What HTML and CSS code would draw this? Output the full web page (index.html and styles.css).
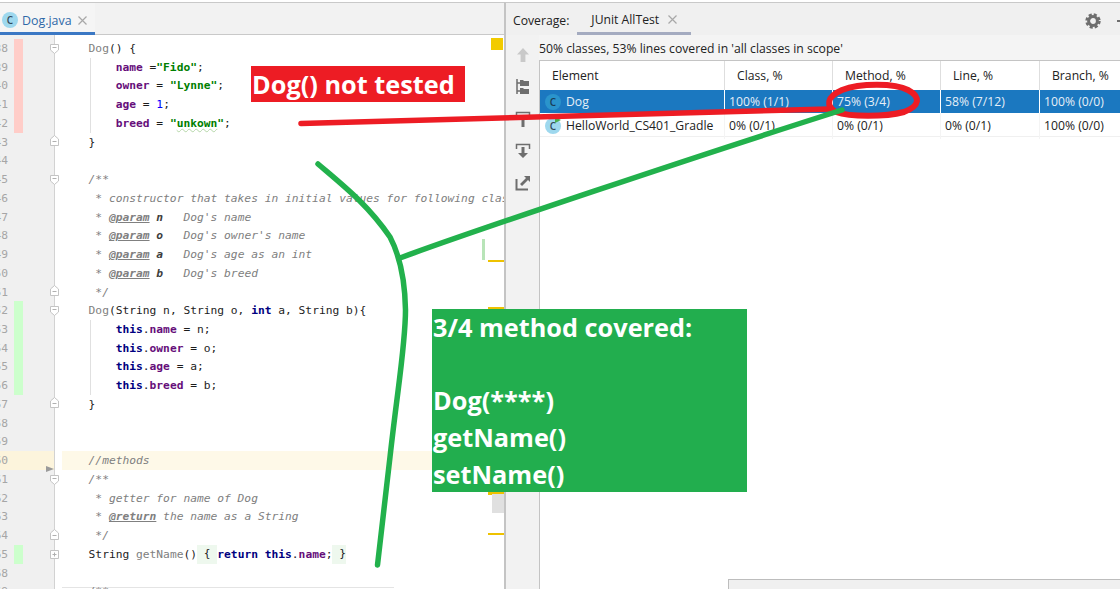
FILE: index.html
```html
<!DOCTYPE html>
<html lang="en">
<head>
<meta charset="utf-8">
<title>Dog.java coverage</title>
<link rel="stylesheet" href="styles.css">
</head>
<body>
<svg class="defs" width="0" height="0" aria-hidden="true">
  <symbol id="fold-open" viewBox="0 0 9 10"><path d="M.5.5h8v5.5l-4 3.5-4-3.5z" fill="#fff" stroke="#c4c4c4"/><path d="M2.5 3.5h4" stroke="#b0b0b0"/></symbol>
  <symbol id="fold-end" viewBox="0 0 9 11"><path d="M.5 10.5h8v-6.5l-4-3.5-4 3.5z" fill="#fff" stroke="#c4c4c4"/><path d="M2.5 6.5h4" stroke="#b0b0b0"/></symbol>
  <symbol id="fold-plus" viewBox="0 0 9 9"><path d="M.5.5h8v8h-8z" fill="#fff" stroke="#c4c4c4"/><path d="M2.5 4.5h4M4.5 2.5v4" stroke="#b0b0b0"/></symbol>
  <symbol id="close" viewBox="0 0 9 9"><path d="M.5.5l8 8M8.5.5l-8 8" fill="none" stroke="#a8a8a8" stroke-width="1.2"/></symbol>
</svg>
<div class="app">
  <section class="left">
    <div class="tabs">
      <div class="tab">
        <span class="cicon">C</span>
        <span class="tab-name">Dog.java</span>
        <svg class="x"><use href="#close"/></svg>
      </div>
    </div>
    <div class="editor">
      <div class="row"><div class="gut"><span class="num"><b>38</b></span><i class="cov red"></i><svg class="fold"><use href="#fold-open"/></svg></div><div class="code">    <span class="un">Dog</span>() {</div></div>
      <div class="row guide"><div class="gut"><span class="num"><b>39</b></span><i class="cov red"></i></div><div class="code">        <span class="f">name</span> =<span class="s">"Fido"</span>;</div></div>
      <div class="row guide"><div class="gut"><span class="num"><b>40</b></span><i class="cov red"></i></div><div class="code">        <span class="f">owner</span> = <span class="s">"Lynne"</span>;</div></div>
      <div class="row guide"><div class="gut"><span class="num"><b>41</b></span><i class="cov red"></i></div><div class="code">        <span class="f">age</span> = <span class="n">1</span>;</div></div>
      <div class="row guide"><div class="gut"><span class="num"><b>42</b></span><i class="cov red"></i></div><div class="code">        <span class="f">breed</span> = <span class="s">"<span class="typo">unkown</span>"</span>;</div></div>
      <div class="row"><div class="gut"><span class="num"><b>43</b></span><i class="cov"></i><svg class="fold end"><use href="#fold-end"/></svg></div><div class="code">    }</div></div>
      <div class="row"><div class="gut"><span class="num"><b>44</b></span><i class="cov"></i></div><div class="code"></div></div>
      <div class="row"><div class="gut"><span class="num"><b>45</b></span><i class="cov"></i><svg class="fold"><use href="#fold-open"/></svg></div><div class="code c">    /**</div></div>
      <div class="row"><div class="gut"><span class="num"><b>46</b></span><i class="cov"></i></div><div class="code c">     * constructor that takes in initial values for following class variables</div></div>
      <div class="row"><div class="gut"><span class="num"><b>47</b></span><i class="cov"></i></div><div class="code c">     * <span class="tag">@param</span> <span class="p">n</span>   Dog's name</div></div>
      <div class="row"><div class="gut"><span class="num"><b>48</b></span><i class="cov"></i></div><div class="code c">     * <span class="tag">@param</span> <span class="p">o</span>   Dog's owner's name</div></div>
      <div class="row"><div class="gut"><span class="num"><b>49</b></span><i class="cov"></i></div><div class="code c">     * <span class="tag">@param</span> <span class="p">a</span>   Dog's age as an int</div></div>
      <div class="row"><div class="gut"><span class="num"><b>50</b></span><i class="cov"></i></div><div class="code c">     * <span class="tag">@param</span> <span class="p">b</span>   Dog's breed</div></div>
      <div class="row"><div class="gut"><span class="num"><b>51</b></span><i class="cov"></i><svg class="fold end"><use href="#fold-end"/></svg></div><div class="code c">     */</div></div>
      <div class="row"><div class="gut"><span class="num"><b>52</b></span><i class="cov green"></i><svg class="fold"><use href="#fold-open"/></svg></div><div class="code">    <span class="un">Dog</span>(String n, String o, <span class="k">int</span> a, String b){</div></div>
      <div class="row guide"><div class="gut"><span class="num"><b>53</b></span><i class="cov green"></i></div><div class="code">        <span class="k">this</span>.<span class="f">name</span> = n;</div></div>
      <div class="row guide"><div class="gut"><span class="num"><b>54</b></span><i class="cov green"></i></div><div class="code">        <span class="k">this</span>.<span class="f">owner</span> = o;</div></div>
      <div class="row guide"><div class="gut"><span class="num"><b>55</b></span><i class="cov green"></i></div><div class="code">        <span class="k">this</span>.<span class="f">age</span> = a;</div></div>
      <div class="row guide"><div class="gut"><span class="num"><b>56</b></span><i class="cov green"></i></div><div class="code">        <span class="k">this</span>.<span class="f">breed</span> = b;</div></div>
      <div class="row"><div class="gut"><span class="num"><b>57</b></span><i class="cov"></i><svg class="fold end"><use href="#fold-end"/></svg></div><div class="code">    }</div></div>
      <div class="row"><div class="gut"><span class="num"><b>58</b></span><i class="cov"></i></div><div class="code"></div></div>
      <div class="row"><div class="gut"><span class="num"><b>59</b></span><i class="cov"></i></div><div class="code"></div></div>
      <div class="row current"><div class="gut"><span class="num"><b>60</b></span><i class="cov"></i><i class="arrow"></i></div><div class="code c">    //methods</div></div>
      <div class="row"><div class="gut"><span class="num"><b>61</b></span><i class="cov"></i><svg class="fold"><use href="#fold-open"/></svg></div><div class="code c">    /**</div></div>
      <div class="row"><div class="gut"><span class="num"><b>62</b></span><i class="cov"></i></div><div class="code c">     * getter for name of Dog</div></div>
      <div class="row"><div class="gut"><span class="num"><b>63</b></span><i class="cov"></i></div><div class="code c">     * <span class="tag">@return</span> the name as a String</div></div>
      <div class="row"><div class="gut"><span class="num"><b>64</b></span><i class="cov"></i><svg class="fold end"><use href="#fold-end"/></svg></div><div class="code c">     */</div></div>
      <div class="row"><div class="gut"><span class="num"><b>65</b></span><i class="cov green"></i><svg class="fold plus"><use href="#fold-plus"/></svg></div><div class="code">    String <span class="un">getName</span>()<span class="folded"> { </span><span class="k">return this</span>.<span class="f">name</span>;<span class="folded"> }</span></div></div>
      <div class="row"><div class="gut"><span class="num"><b>68</b></span><i class="cov"></i></div><div class="code"></div></div>
      <div class="row last"><div class="gut"><span class="num"><b>69</b></span><i class="cov"></i></div><div class="code c">    /**</div></div>
      <i class="mark sq"></i>
      <i class="mark cov-bar"></i>
      <i class="mark dash d1"></i>
      <i class="mark dash d2"></i>
      <i class="mark dash d3"></i>
      <i class="mark dash d4"></i>
      <i class="mark thumb"></i>
    </div>
  </section>

  <section class="right">
    <header class="cov-head">
      <span class="cov-label">Coverage:</span>
      <div class="cov-tab"><span>JUnit AllTest</span><svg class="x"><use href="#close"/></svg></div>
      <svg class="gear" viewBox="0 0 16 16"><circle cx="8" cy="8" r="4.4" fill="none" stroke="#6e6e6e" stroke-width="3"/><circle cx="8" cy="8" r="6.5" fill="none" stroke="#6e6e6e" stroke-width="2.4" stroke-dasharray="3.1 2.0"/></svg>
      <span class="dash-btn"></span>
    </header>
    <div class="cov-body">
      <nav class="tools">
        <svg class="tool" viewBox="0 0 16 16"><path d="M8 1l6 6.5h-3.6V15H5.600V7.500H2z" fill="#c9c9c9"/></svg>
        <svg class="tool" viewBox="0 0 16 16"><path d="M2 0v15M2 4h3M2 12h3" fill="none" stroke="#6e6e6e" stroke-width="1.500"/><path d="M5 1h3l1 1h5v5H5zM5 9h3l1 1h5v5H5z" fill="#6e6e6e"/></svg>
        <svg class="tool" viewBox="0 0 16 16"><path d="M1.500 6V1.500h13V6" fill="none" stroke="#6e6e6e" stroke-width="1.500"/><path d="M8 4l5 5H9.500v7h-3V9H3z" fill="#6e6e6e"/></svg>
        <svg class="tool" viewBox="0 0 16 16"><path d="M1.500 6V1.500h13V6" fill="none" stroke="#6e6e6e" stroke-width="1.500"/><path d="M8 15l5-5H9.500V4h-3v6H3z" fill="#6e6e6e"/></svg>
        <svg class="tool" viewBox="0 0 16 16"><path d="M1.500 4v10.500H13" fill="none" stroke="#6e6e6e" stroke-width="2"/><path d="M9 1h6v6l-2-2-6 6-2-2 6-6z" fill="#6e6e6e"/></svg>
      </nav>
      <div class="main">
        <p class="summary">50% classes, 53% lines covered in 'all classes in scope'</p>
        <div class="table">
          <div class="tr th">
            <div class="first">Element</div><div>Class, %</div><div>Method, %</div><div>Line, %</div><div>Branch, %</div>
          </div>
          <div class="tr sel">
            <div class="first"><span class="cicon small">C</span>Dog</div><div>100% (1/1)</div><div>75% (3/4)</div><div>58% (7/12)</div><div>100% (0/0)</div>
          </div>
          <div class="tr">
            <div class="first"><span class="cicon small run">C</span>HelloWorld_CS401_Gradle</div><div>0% (0/1)</div><div>0% (0/1)</div><div>0% (0/1)</div><div>100% (0/0)</div>
          </div>
        </div>
      </div>
    </div>
  </section>
</div>

<div class="note note-red">Dog() not tested</div>
<div class="note note-green">3/4 method covered:<br><br>Dog(****)<br>getName()<br>setName()</div>
<div class="popup"></div>

<svg class="ink" viewBox="0 0 1120 589" width="1120" height="589" aria-hidden="true">
  <path class="ink-red" d="M301 123.500C420 120 560 116 700 112.500L830 109"/>
  <path class="ink-red oval" d="M842 90C860 83 895 83 908 90C921 97 920 106 904 112C885 117 850 117 836 112C826 106 826 97 842 90Z"/>
  <path class="ink-green" d="M400 258C470 232 700 155 842 110"/>
  <path class="ink-green" d="M318 164C345 187 368 205 390 237C400 256 405 280 405.500 310C405.500 345 398 385 390 457L377.500 565"/>
</svg>
</body>
</html>
```

FILE: styles.css
```css
html, body {
  margin: 0;
  height: 589px;
  overflow: hidden;
  background: #fff;
}
body {
  position: relative;
  font-family: "Open Sans", "Noto Sans", sans-serif;
  font-size: 12.200px;
  color: #222;
}
.defs { position: absolute; }
.app {
  display: flex;
  height: 589px;
  box-sizing: border-box;
  padding-top: 2px;
}

/* left: editor */
.left {
  width: 504px;
  flex: none;
  display: flex;
  flex-direction: column;
  border-top: 1px solid #c9c9c9;
}
.tabs {
  height: 31px;
  flex: none;
  background: #f2f2f2;
  border-bottom: 1px solid #c9c9c9;
}
.tab {
  width: 95px;
  height: 32px;
  box-sizing: border-box;
  border-bottom: 3px solid #3b78c4;
  display: flex;
  align-items: center;
  padding-left: 2px;
  padding-top: 5px;
  background: #f5f5f5;
}
.tab-name {
  margin-left: 4px;
  font-size: 12.400px;
  color: #2f68a8;
}
.x { width: 9px; height: 9px; flex: none; }
.tab .x { margin-left: 6px; }
.cicon {
  width: 16px;
  height: 16px;
  flex: none;
  border-radius: 50%;
  background: #9ed8ee;
  color: #33495a;
  font-size: 10px;
  font-weight: 600;
  line-height: 16px;
  text-align: center;
}
.editor {
  position: relative;
  flex: 1;
  overflow: hidden;
  padding-top: 4px;
  font-family: "DejaVu Sans Mono", monospace;
  font-size: 11.250px;
  color: #1c1c1c;
  background: linear-gradient(to right, #f0f0f0 54px, #d2d2d2 54px, #d2d2d2 55px, #fff 55px);
}
.row {
  position: relative;
  display: flex;
  height: 18.740px;
  line-height: 18.740px;
}
.gut {
  position: relative;
  width: 55px;
  flex: none;
  display: flex;
}
.num {
  width: 8px;
  flex: none;
  display: flex;
  justify-content: flex-end;
  padding-top: 1px;
  color: #a6a6a6;
}
.num b { font-weight: 400; }
.cov { width: 9px; margin-left: 6px; flex: none; }
.cov.red { background: #ffcdc8; }
.cov.green { background: #ccffcc; }
.fold {
  position: absolute;
  left: 50px;
  top: 5px;
  width: 9px;
  height: 10px;
}
.fold.end { top: 2.500px; height: 11px; }
.fold.plus { top: 5px; height: 9px; }
.arrow {
  position: absolute;
  left: 46px;
  top: 14.500px;
  width: 0;
  height: 0;
  border-left: 8px solid #9a9a9a;
  border-top: 3.500px solid transparent;
  border-bottom: 3.500px solid transparent;
}
.code {
  flex: 1;
  min-width: 0;
  margin-left: 6.500px;
  padding-top: 1px;
  white-space: pre;
  overflow: hidden;
}
.current .gut {
  background: linear-gradient(to right, #fcf4dc 54px, #d2d2d2 54px);
}
.current .code { background: #fef9e8; }
.last .code {
  background: linear-gradient(#e4e4e4, #e4e4e4) no-repeat 0 5px / 332px 1px;
}
.guide::before {
  content: "";
  position: absolute;
  left: 90px;
  top: 0;
  bottom: 0;
  width: 1px;
  background: #e0e0e0;
}
.un { color: #808080; }
.f { color: #660e7a; font-weight: 700; }
.s { color: #008000; font-weight: 700; }
.n { color: #0000ff; }
.k { color: #000080; font-weight: 700; }
.c { color: #808080; font-style: italic; }
.tag { font-weight: 700; text-decoration: underline; }
.p { color: #3d3d3d; font-weight: 700; }
.typo { text-decoration: underline wavy #b4d6a8 1px; }
.folded {
  display: inline-block;
  height: 19.740px;
  margin-top: -1px;
  vertical-align: top;
  background: #eef8ee;
}
.mark { position: absolute; display: block; }
.sq { left: 491px; top: 3px; width: 12px; height: 12px; background: #f2cb00; }
.cov-bar { left: 482px; top: 204px; width: 3px; height: 21px; background: #b8e4b8; }
.dash { left: 488px; width: 16px; height: 2px; background: #eec200; }
.d1 { top: 225px; }
.d2 { top: 272px; height: 3px; }
.d3 { top: 457px; height: 3px; }
.d4 { top: 498px; }
.thumb { left: 492px; top: 459px; width: 12px; height: 19px; background: #e0e0e0; }

/* right: coverage */
.right {
  flex: 1;
  min-width: 0;
  display: flex;
  flex-direction: column;
  border-left: 2px solid #c4c4c4;
  border-top: 1px solid #c9c9c9;
  background: #f2f2f2;
}
.cov-head {
  height: 32px;
  flex: none;
  box-sizing: border-box;
  display: flex;
  align-items: center;
  background: #f0f0f0;
  padding-left: 7px;
  padding-top: 3px;
}
.cov-tab {
  margin-left: 8px;
  width: 114px;
  height: 29px;
  box-sizing: border-box;
  border-bottom: 3px solid #a4abc0;
  display: flex;
  align-items: center;
  padding-left: 14px;
}
.cov-tab .x { margin-left: 9px; }
.gear { width: 16px; height: 16px; margin-left: auto; margin-right: 16px; }
.dash-btn { width: 3px; height: 2px; background: #6e6e6e; flex: none; }
.cov-body { flex: 1; display: flex; min-height: 0; }
.tools {
  width: 33px;
  flex: none;
  display: flex;
  flex-direction: column;
  align-items: center;
  gap: 16px;
  padding-top: 11.500px;
}
.tool { width: 16px; height: 16px; flex: none; }
.main { flex: 1; min-width: 0; display: flex; flex-direction: column; }
.summary {
  height: 25px;
  margin: 0;
  box-sizing: border-box;
  padding-top: 5px;
  line-height: 17px;
  white-space: nowrap;
  background: #f4f4f4;
}
.table {
  flex: 1;
  background: #fff;
  border-top: 1px solid #c4c4c4;
  border-left: 1px solid #c4c4c4;
}
.tr {
  display: grid;
  grid-template-columns: 184px 108px 108px 99px 81px;
  height: 24px;
  line-height: 26px;
  border-bottom: 1px solid #f0f0f0;
  box-sizing: border-box;
}
.tr > div {
  box-sizing: border-box;
  padding-left: 4px;
  border-left: 1px solid #f4f4f4;
  white-space: nowrap;
}
.tr > .first {
  border-left: 0;
  padding-left: 5px;
  display: flex;
  align-items: center;
  gap: 5px;
}
.th {
  height: 29px;
  line-height: 30px;
  border-bottom: 0;
}
.th > div { border-left-color: #dedede; padding-left: 12px; margin-bottom: 1px; }
.th > .first { padding-left: 12px; }
.sel {
  background: #1b78c0;
  color: #e6eff7;
  border-bottom: 0;
  height: 23px;
  line-height: 24px;
}
.sel > div { border-left-color: #fff; }
.cicon.small { width: 16px; height: 16px; line-height: 16px; position: relative; }
.sel .cicon { background: #2a94cc; color: #1b3d55; }
.run::after {
  content: "";
  position: absolute;
  right: 0;
  top: -1px;
  border-left: 6px solid #4caf50;
  border-top: 3px solid transparent;
  border-bottom: 3px solid transparent;
}

/* annotations */
.note {
  position: absolute;
  font-family: "Open Sans", "Noto Sans", sans-serif;
  font-weight: 700;
  color: #fff;
}
.note-red {
  left: 251px;
  top: 66px;
  width: 214px;
  height: 36px;
  background: #ed1c24;
  padding-left: 1px;
  box-sizing: border-box;
  font-size: 25.300px;
  line-height: 37px;
}
.note-green {
  left: 432px;
  top: 309px;
  width: 315px;
  height: 183px;
  background: #22ae4e;
  padding-left: 1px;
  box-sizing: border-box;
  font-size: 25.300px;
  line-height: 36.700px;
}
.popup {
  position: absolute;
  left: 728px;
  top: 579px;
  right: 0;
  bottom: 0;
  background: #f0f0f0;
  border-top: 1px solid #bdbdbd;
  border-left: 1px solid #bdbdbd;
}
.ink {
  position: absolute;
  left: 0;
  top: 0;
  pointer-events: none;
}
.ink-red, .ink-green {
  fill: none;
  stroke-width: 5.500;
  stroke-linecap: round;
  stroke-linejoin: round;
}
.ink-red { stroke: #ed1c24; }
.oval { stroke-width: 6; }
.ink-green { stroke: #22b14c; }
```
